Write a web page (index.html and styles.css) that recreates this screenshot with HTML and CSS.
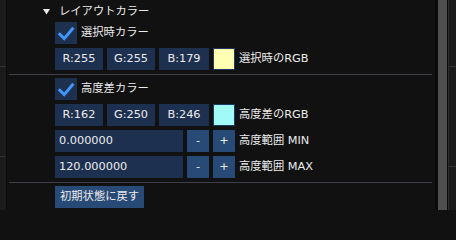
FILE: index.html
```html
<!DOCTYPE html>
<html lang="ja">
<head>
<meta charset="utf-8">
<link rel="stylesheet" href="styles.css">
</head>
<body>
<div class="screen">
  <div class="side side-left">
    <div class="side-block b1"></div>
    <div class="side-line"></div>
    <div class="side-block b2"></div>
    <div class="side-line"></div>
  </div>
  <div class="panel">
    <div class="content">
      <div class="tree">
        <svg class="arrow" width="7" height="6" viewBox="0 0 7 6"><polygon points="0,0 7,0 3.5,5.5" fill="#ececec"/></svg>
        <span class="label">レイアウトカラー</span>
      </div>
      <div class="row r-check1">
        <span class="checkbox"><svg width="22" height="22" viewBox="0 0 22 22"><polyline points="3.8,11.2 9.2,16.6 18.4,5.8" fill="none" stroke="#4296fa" stroke-width="3" stroke-linecap="butt" stroke-linejoin="miter"/></svg></span>
        <span class="label">選択時カラー</span>
      </div>
      <div class="row">
        <span class="frame chan c1">R:255</span>
        <span class="frame chan c2">G:255</span>
        <span class="frame chan c3">B:179</span>
        <span class="swatch yellow"></span>
        <span class="label">選択時のRGB</span>
      </div>
      <div class="sep"></div>
      <div class="row">
        <span class="checkbox"><svg width="22" height="22" viewBox="0 0 22 22"><polyline points="3.8,11.2 9.2,16.6 18.4,5.8" fill="none" stroke="#4296fa" stroke-width="3" stroke-linecap="butt" stroke-linejoin="miter"/></svg></span>
        <span class="label">高度差カラー</span>
      </div>
      <div class="row">
        <span class="frame chan c1">R:162</span>
        <span class="frame chan c2">G:250</span>
        <span class="frame chan c3">B:246</span>
        <span class="swatch cyan"></span>
        <span class="label">高度差のRGB</span>
      </div>
      <div class="row">
        <span class="frame input">0.000000</span>
        <span class="btn small">-</span>
        <span class="btn small">+</span>
        <span class="label">高度範囲 MIN</span>
      </div>
      <div class="row">
        <span class="frame input">120.000000</span>
        <span class="btn small">-</span>
        <span class="btn small">+</span>
        <span class="label">高度範囲 MAX</span>
      </div>
      <div class="sep"></div>
      <div class="row">
        <span class="btn reset">初期状態に戻す</span>
      </div>
    </div>
  </div>
  <div class="scrollbar"><div class="grab"></div></div>
  <div class="side side-right">
    <div class="side-block b1"></div>
    <div class="side-line"></div>
    <div class="side-block b3"></div>
    <div class="side-line"></div>
  </div>
</div>
</body>
</html>
```
FILE: styles.css
```css
* { box-sizing: border-box; }
html, body {
  margin: 0;
  padding: 0;
  background: #111111;
}
body {
  font-family: "DejaVu Sans", "Noto Sans CJK JP", sans-serif;
  font-size: 11.3px;
  color: #ececec;
}
.screen {
  display: flex;
  width: 456px;
  height: 210px;
  overflow: hidden;
}
.side {
  display: flex;
  flex-direction: column;
  width: 7px;
  background: #1b1b1b;
}
.side-left { border-right: 1px solid #0a0a0a; width: 7px; }
.side-right { border-left: 1px solid #2c2c2c; width: 8px; }
.side-block.b1 { height: 66px; }
.side-block.b2 { height: 89px; }
.side-block.b3 { height: 99px; }
.side-line { height: 1px; background: #333333; }

.panel {
  width: 428px;
  background: #111111;
}
.content {
  display: flex;
  flex-direction: column;
}
.tree {
  display: flex;
  align-items: center;
  height: 20px;
  margin-top: 2px;
  padding-left: 36px;
}
.tree .arrow { margin-right: 9px; }
.row {
  display: flex;
  align-items: center;
  gap: 4px;
  height: 22px;
  margin-top: 4px;
  padding-left: 48px;
}
.r-check1 { margin-top: 0; }
.label {
  white-space: nowrap;
  line-height: 22px;
}
.checkbox {
  width: 22px;
  height: 22px;
  background: #1d3050;
  display: block;
}
.checkbox svg { display: block; }
.frame {
  height: 22px;
  line-height: 22px;
  background: #1d3050;
  color: #ececec;
  white-space: nowrap;
}
.chan { text-align: center; }
.chan.c1 { width: 48px; }
.chan.c2 { width: 48px; }
.chan.c3 { width: 50px; }
.swatch {
  width: 22px;
  height: 22px;
  border: 1px solid #1f3a5e;
}
.swatch.yellow { background: #ffffb3; }
.swatch.cyan { background: #a2faf6; }
.input {
  width: 128px;
  padding-left: 4px;
}
.btn {
  height: 22px;
  line-height: 22px;
  background: #274a77;
  color: #ececec;
  text-align: center;
  white-space: nowrap;
}
.btn.small { width: 22px; }
.btn.reset { padding: 0 5px; width: 89px; }
.sep {
  height: 1px;
  background: #40404a;
  margin: 4px 3px 0 2px;
}
.sep + .row { margin-top: 3px; }
.scrollbar {
  width: 13px;
  background: #0a0a0a;
  padding: 0 1px 0 3px;
}
.grab {
  width: 9px;
  height: 100%;
  background: #4f4f4f;
}
```
